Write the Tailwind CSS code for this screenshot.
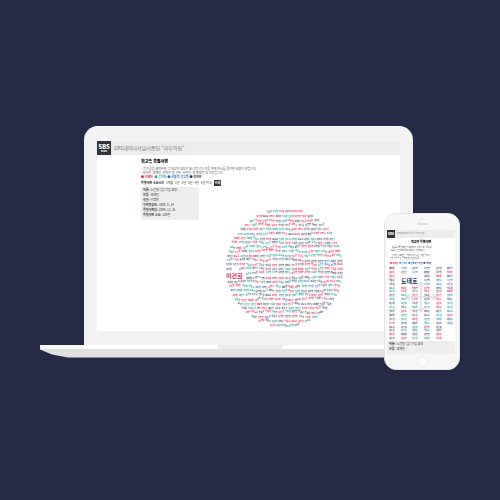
<!DOCTYPE html>
<html lang="ko">
<head>
<meta charset="utf-8">
<meta name="viewport" content="width=device-width, initial-scale=1">
<title>SBS데이터저널리즘팀 마부작침</title>
<script src="https://cdn.jsdelivr.net/npm/@tailwindcss/browser@4"></script>
</head>
<body class="bg-[#252a46] font-['Noto_Sans_CJK_KR','Noto_Sans',sans-serif] text-[#333]">
<main class="flex min-h-screen items-center justify-center overflow-hidden">
  <div class="relative w-[84%] pb-[17px]">

    <!-- Laptop -->
    <section aria-label="노트북 화면">
      <div class="ml-[44px] mr-[47px] rounded-t-[14px] border-t border-white bg-[#f2f2f2] px-[13px] pt-[14px] pb-[14px]">
        <div class="bg-white pb-[3px]">
          <header class="flex h-[14px] items-center gap-[3px] bg-[#ececec]">
            <a href="#" class="flex h-[14px] w-[14px] flex-col items-center justify-center bg-[#30343a] font-black text-white"><span class="text-[6px] leading-[7px]">SBS</span><span class="text-[2px] leading-[3px]">NEWS</span></a>
            <span class="text-[5px] leading-[8px] text-[#7c7c7c]">SBS데이터저널리즘팀 "마부작침"</span>
          </header>
          <div class="pl-[44px] pt-[3px]">
            <h1 class="text-[4px] font-black leading-[7px] text-black">최고속 특별사면</h1>
            <p class="whitespace-nowrap pt-[2px] text-[3px] leading-[4px] text-[#555]">· 각 이름을 클릭하면 그 대상자 정보가 표시됩니다. 이름 위에 커서를 올리면 내용이 보입니다.<br>· 정치인, 경제인, 공직자 등 구분, 사면일, 형 확정일 및 기간입니다.</p>
            <ul class="flex gap-px text-[3px] font-bold leading-[5px]">
              <li class="text-[#e5224f]">● 경제인</li><li class="text-[#16a6a0]">● 공직자</li><li class="text-[#1959b8]">● 선출직 공무원</li><li class="text-[#252a46]">● 정치인</li>
            </ul>
            <div class="flex items-center gap-[2px] text-[3px] leading-[6px]">
              <b class="text-black">특별사면 소요시간</b><button>1개월</button><button>1년</button><button>2년</button><button>3년</button><button>4년</button><button>5년 이상</button><button class="bg-[#30343a] px-px font-bold text-white">전체</button>
            </div>
            <dl class="mt-px h-[33px] w-[58px] bg-[#ededed] py-px pl-[2px] text-[3px] leading-[5px]">
              <div class="flex gap-px"><dt class="font-bold">이름:</dt><dd>노건평 (남) 기업 회장</dd></div>
              <div class="flex gap-px"><dt class="font-bold">분류:</dt><dd>경제인</dd></div>
              <div class="flex gap-px"><dt class="font-bold">정권:</dt><dd>이명박</dd></div>
              <div class="flex gap-px"><dt class="font-bold">형확정일자:</dt><dd>2009. 8. 14</dd></div>
              <div class="flex gap-px"><dt class="font-bold">특별사면일:</dt><dd>2009. 12. 31</dd></div>
              <div class="flex gap-px"><dt class="font-bold">특별사면 소요:</dt><dd>139일</dd></div>
            </dl>
          </div>
          <svg id="cloud" viewBox="0 0 118 118" class="-mt-[10px] ml-[129px] block h-[118px] w-[118px]" role="img" aria-label="특별사면 대상자 이름"></svg>
        </div>
      </div>
      <div class="h-[13px] bg-[#e1e1df] [clip-path:polygon(0_0,100%_0,100%_5px,calc(100%-12px)_10px,calc(100%-28px)_100%,28px_100%,12px_10px,0_5px)]">
        <div class="h-[4px] bg-white"><div class="mx-auto h-[4px] w-[66px] rounded-b-[4px] bg-[#e9e9e9]"></div></div>
      </div>
    </section>

    <!-- Phone -->
    <section aria-label="휴대전화 화면" class="absolute bottom-[5px] right-0 h-[157px] w-[76px] overflow-hidden rounded-[12px] border border-[#e4e4e4] bg-[#f7f7f7] px-[4px]">
      <div class="flex h-[16px] flex-col items-center gap-[3px] pt-[4px]">
        <i class="size-[2px] rounded-full bg-[#dedede]"></i><i class="h-[2px] w-[11px] rounded-full bg-[#dadada]"></i>
      </div>
      <div class="-ml-[2px] bg-white">
        <header class="flex h-[8px] items-center gap-[2px] bg-[#ececec]">
          <a href="#" class="flex size-[8px] shrink-0 items-center justify-center bg-[#30343a] text-[3px] font-black leading-[8px] text-white">SBS</a>
          <span class="whitespace-nowrap text-[2px] leading-[4px] text-[#858585]">SBS데이터저널리즘팀 "마부작침"</span>
        </header>
        <h2 class="pt-[2px] text-center text-[3px] font-black leading-[5px] text-black">최고속 특별사면</h2>
        <p class="whitespace-nowrap pl-[4px] pt-px text-[2px] leading-[3px] text-[#333]">· 이름을 클릭하면 그 대상자의 정보가 표시됩니다.<br>이름을 선택하여 상세 내용을 확인하세요.</p>
        <p class="whitespace-nowrap pl-[4px] pt-[2px] text-[2px] leading-[3px] text-[#333]">· 정치인, 경제인, 공직자 등의 구분, 사면일 표시<br>형 확정일 및 특별사면 기간입니다.</p>
        <ul class="flex gap-px whitespace-nowrap pl-[3px] pt-px text-[2px] font-bold leading-[5px]">
          <li class="text-[#e5224f]">● 경제인</li><li class="text-[#16a6a0]">● 공직자</li><li class="text-[#1959b8]">● 선출직 공무원</li><li class="text-[#252a46]">● 정치인</li>
        </ul>
        <svg id="list" viewBox="0 0 70 75" class="block h-[75px] w-[70px]" role="img" aria-label="이름 목록"></svg>
        <dl class="h-[13px] bg-[#eeeeee] pl-[2px] pt-px text-[3px] leading-[5px]">
          <div class="flex gap-px"><dt class="font-bold">이름:</dt><dd>노건평 (남) 기업 회장</dd></div>
          <div class="flex gap-px"><dt class="font-bold">분류:</dt><dd>경제인</dd></div>
        </dl>
      </div>
      <button aria-label="홈" class="mx-auto mt-[2px] block size-[11px] rounded-full border border-[#e8e8e8] bg-[#fafafa]"></button>
    </section>
  </div>
</main>
<script>
const NS = 'http://www.w3.org/2000/svg';
const names = ['김현철','박지원','이건희','최태원','정몽구','서청원','권노갑','홍인길','안희정','김승연','이학수','조동만','한화갑','김신건','임동원','강금원','노건평','최도술'];
const colors = ['#e8204f','#0f9592','#3a4060','#e8204f','#0f9592','#50556e'];
let seed = 17;
const rnd = () => (seed = (seed * 16807) % 2147483647) / 2147483647;
const pick = a => a[Math.floor(rnd() * a.length)];
function el(parent, tag, attrs, text) {
  const e = document.createElementNS(NS, tag);
  for (const k in attrs) e.setAttribute(k, attrs[k]);
  if (text) e.textContent = text;
  parent.append(e);
}

// Word cloud: names follow gently sloping rows that fill a circle
const cloud = document.getElementById('cloud');
for (let row = 0; row < 27; row++) {
  const base = 3 + row * 4.35;
  const half = Math.sqrt(59 * 59 - (base - 59) ** 2);
  const count = Math.max(1, Math.round(half * 2 / 6.5));
  let drift = 0;
  for (let i = 0; i < count; i++) {
    const x = 59 - half + i * (half * 2 / count);
    const next = Math.max(-0.7, Math.min(0.7, drift + (rnd() - 0.5) * 2.4));
    const slope = (next - drift) / 2;
    const y = base + drift;
    drift = next;
    if (x < 17.5 && y > 60 && y < 71.5) continue;
    el(cloud, 'text', {
      x: x.toFixed(1),
      y: [0, 1, 2].map(n => (y + slope * n).toFixed(1)).join(' '),
      'font-size': 2, 'font-weight': 700,
      fill: rnd() < 0.03 ? '#3a55d8' : pick(colors)
    }, pick(names));
  }
}
el(cloud, 'text', { x: 0, y: 68, 'font-size': 6, 'font-weight': 700, fill: '#e0204f' }, '이건희');

// Phone: columns of names
const list = document.getElementById('list');
[2, 14, 25, 37, 49, 60].forEach((x, col) => {
  for (let row = 0; row < (col === 5 ? 15 : 19); row++) {
    if ((col === 1 || col === 2) && row > 1 && row < 5) continue;
    el(list, 'text', { x, y: 3 + row * 3.9, 'font-size': 2, 'font-weight': 700, fill: pick(colors) }, pick(names));
  }
});
el(list, 'path', { d: 'M34 17v28M20 31h28M31 20l3-4 3 4M31 42l3 4 3-4M23 28l-4 3 4 3M45 28l4 3-4 3', fill: 'none', stroke: '#d0d0d0' });
el(list, 'text', { x: 14, y: 17, 'font-size': 6, 'font-weight': 700, fill: '#252a5a' }, '도태호');
</script>
</body>
</html>
